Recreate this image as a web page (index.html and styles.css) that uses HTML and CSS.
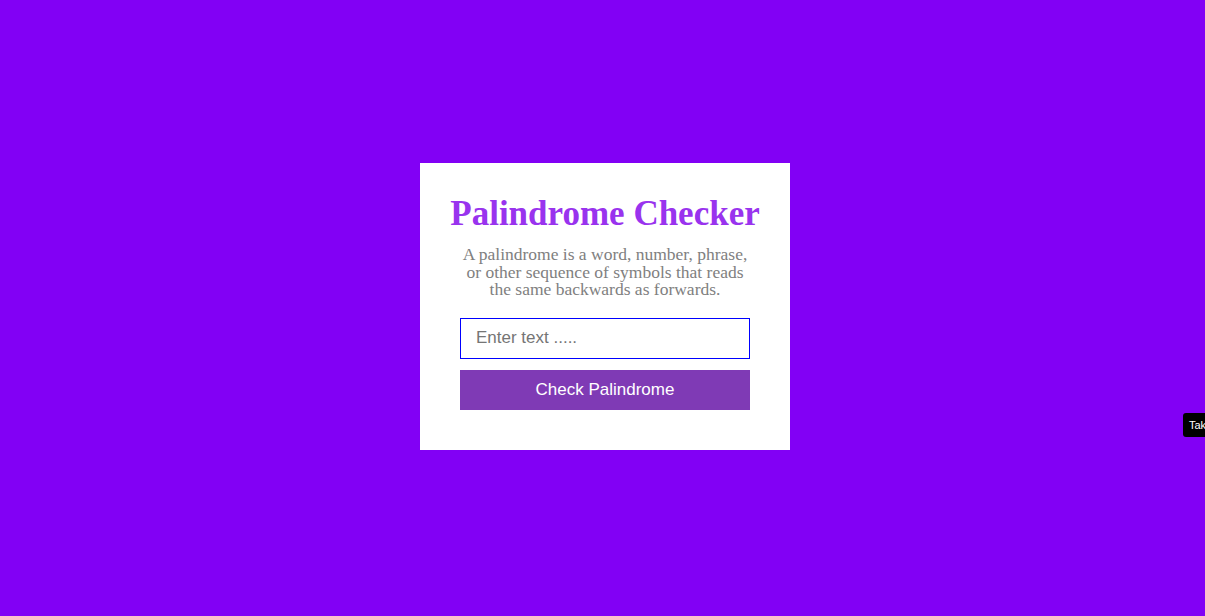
FILE: index.html
```html
<!DOCTYPE html>
<html>
<head>
<meta charset="utf-8">
<link rel="stylesheet" href="styles.css">
</head>
<body>
<div class="card">
  <h1 class="title">Palindrome Checker</h1>
  <p class="desc">A palindrome is a word, number, phrase, or other sequence of symbols that reads the same backwards as forwards.</p>
  <input class="field" type="text" placeholder="Enter text .....">
  <button class="btn">Check Palindrome</button>
</div>
<div class="tip">Take</div>
</body>
</html>
```
FILE: styles.css
```css
html, body { height: 100%; }
body {
  margin: 0;
  box-sizing: border-box;
  padding: 0 0 3px 5px;
  background: #8200f5;
  display: flex;
  align-items: center;
  justify-content: center;
  overflow: hidden;
  position: relative;
}
.card {
  background: #fff;
  width: 290px;
  padding: 31px 40px 40px;
  display: flex;
  flex-direction: column;
  align-items: center;
}
.title {
  font-family: "Liberation Serif", serif;
  font-weight: bold;
  font-size: 35px;
  color: #9933ee;
  margin: 0;
  white-space: nowrap;
}
.desc {
  font-family: "Liberation Serif", serif;
  font-size: 17.5px;
  line-height: 17.5px;
  color: #808080;
  text-align: center;
  margin: 12px 0 19px;
}
.field {
  box-sizing: border-box;
  width: 290px;
  height: 41px;
  border: 1px solid #0000ff;
  padding: 0 15px;
  font-family: "Liberation Sans", sans-serif;
  font-size: 17px;
  outline: none;
  margin: 0 0 11px;
}
.field::placeholder { color: #757575; }
.btn {
  width: 290px;
  height: 40px;
  border: none;
  background: #7f3ab5;
  color: #fff;
  font-family: "Liberation Sans", sans-serif;
  font-size: 17px;
}
.tip {
  position: absolute;
  left: 1183px;
  top: 413px;
  background: #000;
  color: #fff;
  font-family: "Liberation Sans", sans-serif;
  font-size: 11px;
  padding: 6px 6px;
  border-radius: 3px;
  white-space: nowrap;
}
```
